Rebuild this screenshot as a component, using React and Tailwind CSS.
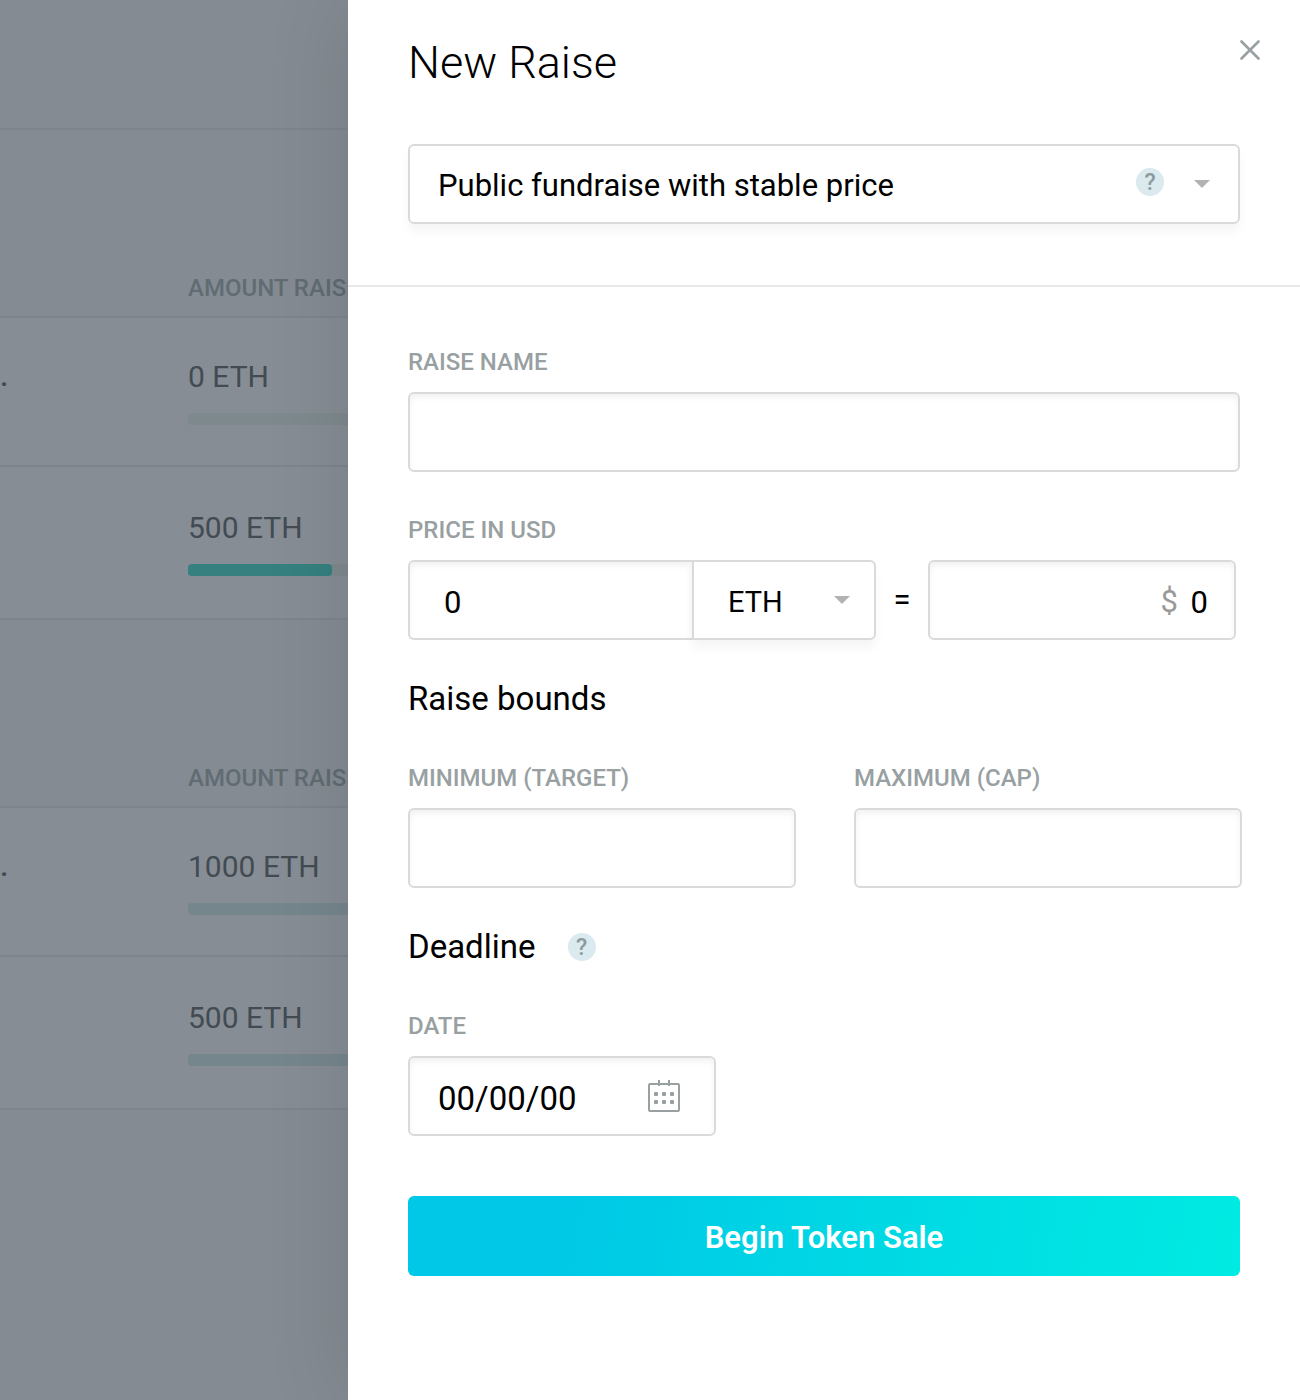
import React from "react";

const raises = [
  {
    id: "a",
    rows: [
      { amount: "0 ETH", height: "h-[149px]", track: "bg-[#7e898e]", fill: 0 },
      { amount: "500 ETH", height: "h-[153px]", track: "bg-[#7e898e]", fill: 144 },
    ],
  },
  {
    id: "b",
    rows: [
      { amount: "1000 ETH", height: "h-[149px]", track: "bg-[#76868d]", fill: 0 },
      { amount: "500 ETH", height: "h-[153px]", track: "bg-[#76868d]", fill: 0 },
    ],
  },
];

const box =
  "h-20 w-full border-2 border-[#dadada] bg-white leading-9 text-black outline-none";
const inset = "shadow-[inset_0_4px_6px_rgba(0,0,0,0.05)]";
const drop = "shadow-[0_8px_10px_rgba(0,0,0,0.04)]";

function RaiseTable({ rows }) {
  return (
    <table className="w-full table-fixed border-collapse text-left">
      <thead>
        <tr className="h-[187px] border-b-2 border-[#7d858c]">
          <th className="w-[188px]" aria-label="Name" />
          <th className="pb-4 align-bottom text-2xl leading-6 font-medium text-[#606c72]">
            AMOUNT RAISED
          </th>
        </tr>
      </thead>
      <tbody className="bg-[#868d94] text-[30px] leading-9 text-[#434b52]">
        {rows.map((row, i) => (
          <tr key={i} className={"border-b-2 border-[#7d858c] " + row.height}>
            <td className="pb-8 font-medium">{i === 0 ? "." : ""}</td>
            <td>
              <div>{row.amount}</div>
              <div className={"mt-[18px] h-3 rounded-sm " + row.track}>
                {row.fill > 0 && (
                  <div className="h-3 rounded-sm bg-[#368080]" style={{ width: row.fill }} />
                )}
              </div>
            </td>
          </tr>
        ))}
      </tbody>
    </table>
  );
}

function Arrow({ className }) {
  return (
    <svg className={"pointer-events-none absolute top-9 " + className} width="16" height="8" viewBox="0 0 16 8" aria-hidden="true">
      <path d="M0 0h16L8 8z" fill="#b3b3b3" />
    </svg>
  );
}

function Help({ className = "" }) {
  return (
    <button
      type="button"
      aria-label="Help"
      className={"flex size-7 items-center justify-center rounded-full bg-[#daeaef] pt-0.5 text-[23px] leading-6 font-medium text-[#8b9a9d] " + className}
    >
      ?
    </button>
  );
}

function Label({ htmlFor, children }) {
  return (
    <label htmlFor={htmlFor} className="mb-[18px] block text-2xl leading-6 font-medium text-[#98a0a2]">
      {children}
    </label>
  );
}

function Heading({ children }) {
  return <h2 className="text-[33px] leading-[38px]">{children}</h2>;
}

export default function App() {
  return (
    <div className="relative min-h-screen overflow-hidden bg-[#848b92] font-['Roboto',sans-serif]">
      <div className="absolute inset-0" aria-hidden="true">
        <div className="h-[130px] border-b-2 border-[#7d858c]" />
        {raises.map((group) => (
          <RaiseTable key={group.id} rows={group.rows} />
        ))}
      </div>

      <aside className="relative ml-[348px] min-h-screen bg-white pb-16 text-black shadow-[0_0_80px_rgba(0,0,0,0.12)]">
        <header className="border-b-2 border-[#e8e8e8] px-[60px] pt-9 pb-[61px]">
          <div className="flex items-start justify-between">
            <h1 className="text-[45px] leading-[54px] font-light">New Raise</h1>
            <button type="button" aria-label="Close" className="-mr-6 p-1 text-[#98a0a2]">
              <svg width="20" height="20" viewBox="0 0 20 20" fill="none" stroke="currentColor" strokeWidth="2.6" strokeLinecap="round">
                <path d="M1.5 1.5l17 17M18.5 1.5l-17 17" />
              </svg>
            </button>
          </div>
          <div className="relative mt-[54px]">
            <select aria-label="Raise type" className={box + " appearance-none rounded-md pt-1 pl-7 text-[31px] " + drop}>
              <option>Public fundraise with stable price</option>
            </select>
            <Help className="absolute top-6 right-[76px]" />
            <Arrow className="right-[30px]" />
          </div>
        </header>

        <form className="px-[60px] pt-[63px]" onSubmit={(e) => e.preventDefault()}>
          <Label htmlFor="name">RAISE NAME</Label>
          <input id="name" type="text" className={box + " rounded-md px-7 text-[31px] " + inset} />

          <div className="mt-[46px]">
            <Label htmlFor="price">PRICE IN USD</Label>
            <div className="mr-1 flex items-center">
              <div className="flex min-w-0 flex-1">
                <input id="price" type="text" defaultValue="0" className={box + " min-w-0 flex-1 rounded-l-md border-r-0 px-[34px] pt-1 text-[31px] " + inset} />
                <div className="relative w-[184px] shrink-0">
                  <select aria-label="Currency" className={box + " appearance-none rounded-r-md pt-1 pl-[34px] text-[29px] " + drop}>
                    <option>ETH</option>
                  </select>
                  <Arrow className="right-[26px]" />
                </div>
              </div>
              <span className="w-[52px] shrink-0 text-center text-[31px] leading-9">=</span>
              <div className="relative w-[308px] shrink-0">
                <input aria-label="Price in dollars" type="text" defaultValue="0" className={box + " rounded-md px-[26px] pt-1 text-right text-[31px] " + inset} />
                <span className="pointer-events-none absolute top-6 right-[58px] text-[31px] leading-9 text-[#999]">$</span>
              </div>
            </div>
          </div>

          <div className="mt-10">
            <Heading>Raise bounds</Heading>
            <div className="mt-12 -mr-0.5 grid grid-cols-2 gap-[58px]">
              <div>
                <Label htmlFor="min">MINIMUM (TARGET)</Label>
                <input id="min" type="text" className={box + " rounded-md px-7 text-[31px] " + inset} />
              </div>
              <div>
                <Label htmlFor="max">MAXIMUM (CAP)</Label>
                <input id="max" type="text" className={box + " rounded-md px-7 text-[31px] " + inset} />
              </div>
            </div>
          </div>

          <div className="mt-10">
            <div className="flex items-center gap-8">
              <Heading>Deadline</Heading>
              <Help />
            </div>
            <div className="mt-12">
              <Label htmlFor="date">DATE</Label>
              <div className="relative w-[308px]">
                <input id="date" type="text" defaultValue="00/00/00" className={box + " rounded-md pt-1 pr-20 pl-7 text-[33px] " + inset} />
                <button type="button" aria-label="Choose date" className="absolute top-6 right-9">
                  <svg width="32" height="32" viewBox="0 0 32 32" fill="none" stroke="#98a0a2" strokeWidth="2">
                    <rect x="1" y="4" width="30" height="27" rx="1" />
                    <path d="M11 0v6M21 0v6" />
                    <g fill="#98a0a2" stroke="none">
                      <rect x="6" y="12" width="4" height="4" rx="1" />
                      <rect x="14" y="12" width="4" height="4" rx="1" />
                      <rect x="22" y="12" width="4" height="4" rx="1" />
                      <rect x="6" y="20" width="4" height="4" rx="1" />
                      <rect x="14" y="20" width="4" height="4" rx="1" />
                      <rect x="22" y="20" width="4" height="4" rx="1" />
                    </g>
                  </svg>
                </button>
              </div>
            </div>
          </div>

          <button
            type="submit"
            className="mt-[60px] block h-20 w-full rounded-md bg-[linear-gradient(100deg,#00c8e6_18%,#00ebe2_100%)] pt-1 text-[31px] leading-9 font-semibold text-white"
          >
            Begin Token Sale
          </button>
        </form>
      </aside>
    </div>
  );
}
